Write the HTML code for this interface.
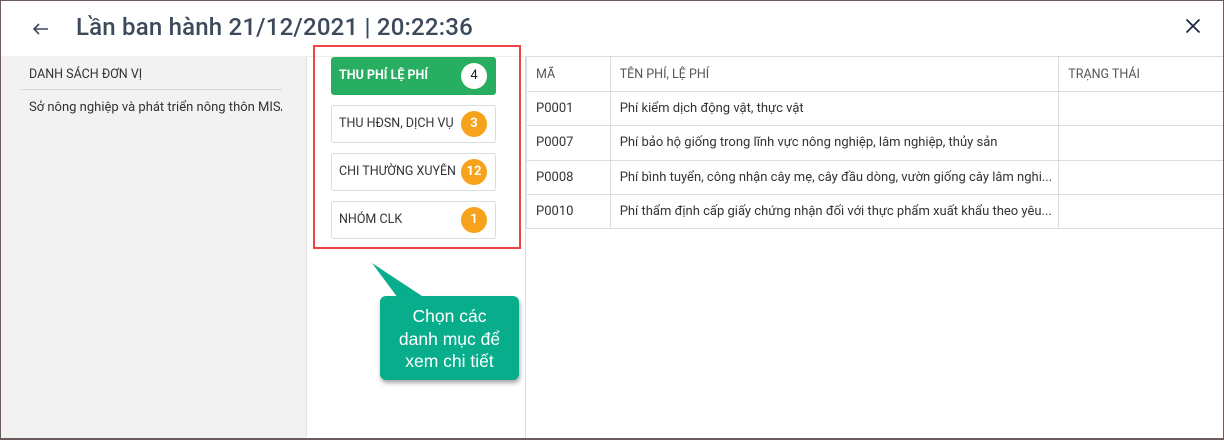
<!DOCTYPE html>
<html><head><meta charset="utf-8"><style>
*{box-sizing:border-box;margin:0;padding:0}
body{width:1224px;height:440px;overflow:hidden;background:#fff;font-family:"Roboto","Liberation Sans","DejaVu Sans",sans-serif;position:relative}
.frame{position:absolute;left:0;top:0;width:1224px;height:440px;border:1px solid #6b5b5b;border-width:1px 1px 2px 1px;pointer-events:none;z-index:10}
.abs{position:absolute}
.title{left:76px;top:13px;font-size:24px;color:#3d4a5c;font-weight:500;letter-spacing:0.2px}
.left{left:0;top:56px;width:307px;height:384px;background:#f2f2f2;border-right:1px solid #e3e3e3}
.mid{left:307px;top:56px;width:219px;height:384px;border-right:1px solid #ddd;border-top:1px solid #eee}
.btn{position:absolute;left:331px;width:165px;height:38px;border:1px solid #ddd;border-radius:3px;font-size:12.5px;color:#333;padding-left:7px;line-height:36px;background:#fff}
.btn.act{background:#27ae60;border-color:#27ae60;color:#fff;font-weight:bold}
.badge{position:absolute;right:8px;top:5px;width:26px;height:26px;border-radius:50%;background:#f7a21b;color:#fff;font-weight:bold;font-size:13px;text-align:center;line-height:26px}
.act .badge{background:#fff;color:#222;font-weight:normal}
.red{left:313px;top:45px;width:208px;height:204px;border:2px solid #ee4444}
table{position:absolute;left:526px;top:56px;border-collapse:collapse;font-size:13px;color:#333}
td{border:1px solid #ddd;height:34.3px;padding-left:9px;white-space:nowrap}
tr.h td{font-size:12.5px;color:#555;height:35px}
.call{left:380px;top:296px;width:139px;height:84px;background:#08ad8b;border-radius:6px;box-shadow:1px 3px 4px rgba(0,0,0,.35);color:#fff;font-family:"Liberation Sans",sans-serif;font-size:17.5px;text-align:center;line-height:22.5px;padding-top:9px}
</style></head><body>
<svg class="abs" style="left:31px;top:22px" width="20" height="14" viewBox="0 0 20 14"><path d="M17 7H3M8 2L3 7l5 5" stroke="#3d4a5c" stroke-width="1.6" fill="none"/></svg>
<div class="abs title">Lần ban hành 21/12/2021 | 20:22:36</div>
<svg class="abs" style="left:1185px;top:18px" width="16" height="16" viewBox="0 0 16 16"><path d="M1.5 1.5l13 13M14.5 1.5l-13 13" stroke="#1e2a44" stroke-width="1.8"/></svg>
<div class="abs left">
 <div class="abs" style="left:29px;top:11px;font-size:12.5px;color:#333">DANH SÁCH ĐƠN VỊ</div>
 <div class="abs" style="left:21px;top:33px;width:261px;height:1px;background:#d8d8d8"></div>
 <div class="abs" style="left:29px;top:44px;font-size:13px;color:#333;white-space:nowrap;width:253px;overflow:hidden">Sở nông nghiệp và phát triển nông thôn MISA</div>
</div>
<div class="abs mid"></div>
<div class="btn act" style="top:57px">THU PHÍ LỆ PHÍ<span class="badge">4</span></div>
<div class="btn" style="top:105px">THU HĐSN, DỊCH VỤ<span class="badge">3</span></div>
<div class="btn" style="top:153px">CHI THƯỜNG XUYÊN<span class="badge">12</span></div>
<div class="btn" style="top:201px">NHÓM CLK<span class="badge">1</span></div>
<div class="abs red"></div>
<table>
<tr class="h"><td style="width:86px">MÃ</td><td style="width:449px">TÊN PHÍ, LỆ PHÍ</td><td style="width:170px">TRẠNG THÁI</td></tr>
<tr><td>P0001</td><td>Phí kiểm dịch động vật, thực vật</td><td></td></tr>
<tr><td>P0007</td><td>Phí bảo hộ giống trong lĩnh vực nông nghiệp, lâm nghiệp, thủy sản</td><td></td></tr>
<tr><td>P0008</td><td>Phí bình tuyển, công nhận cây mẹ, cây đầu dòng, vườn giống cây lâm nghi...</td><td></td></tr>
<tr><td>P0010</td><td>Phí thẩm định cấp giấy chứng nhận đối với thực phẩm xuất khẩu theo yêu...</td><td></td></tr>
</table>
<svg class="abs" style="left:370px;top:260px" width="60" height="40"><path d="M2 3L28 38H55Z" fill="#08ad8b"/></svg>
<div class="abs call">Chọn các<br>danh mục để<br>xem chi tiết</div>
<div class="frame"></div>
</body></html>
